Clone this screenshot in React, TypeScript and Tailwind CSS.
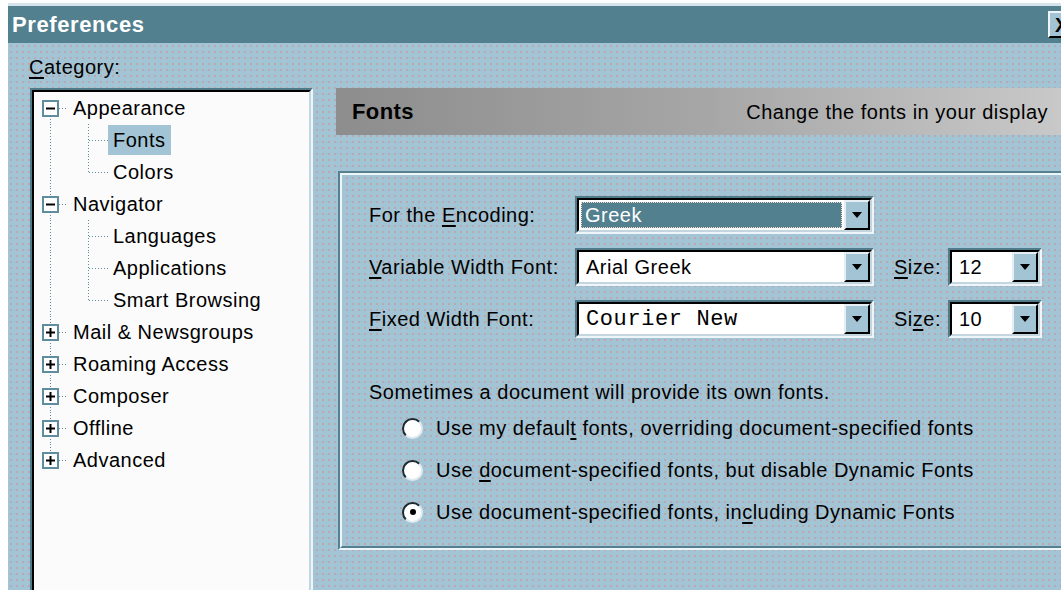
import React from 'react';

type TreeNode = { label: string; children?: string[] };

const tree: TreeNode[] = [
  { label: 'Appearance', children: ['Fonts', 'Colors'] },
  { label: 'Navigator', children: ['Languages', 'Applications', 'Smart Browsing'] },
  { label: 'Mail & Newsgroups' },
  { label: 'Roaming Access' },
  { label: 'Composer' },
  { label: 'Offline' },
  { label: 'Advanced' },
];

const SELECTED = 'Fonts';
const LINE = '#5f8d9d';

// dotted face of the dialog
const FACE =
  'bg-[#a3c4d4] bg-[radial-gradient(circle,#b7a9b1_0.9px,transparent_1.3px)] bg-[length:6px_6px]';

function TopGutter({ first, last, open }: { first: boolean; last: boolean; open: boolean }) {
  return (
    <svg width="34" height="32" className="shrink-0">
      {!first && <line x1="16.5" y1="0" x2="16.5" y2="8" stroke={LINE} strokeDasharray="1 2" />}
      {!last && <line x1="16.5" y1="24" x2="16.5" y2="32" stroke={LINE} strokeDasharray="1 2" />}
      <line x1="25" y1="16.5" x2="34" y2="16.5" stroke={LINE} strokeDasharray="1 2" />
      <rect x="9" y="9" width="15" height="15" fill="#fff" stroke={LINE} strokeWidth="2" />
      <line x1="12" y1="16.5" x2="21" y2="16.5" stroke="#000" strokeWidth="2" />
      {!open && <line x1="16.5" y1="12" x2="16.5" y2="21" stroke="#000" strokeWidth="2" />}
    </svg>
  );
}

function ChildGutter({ lastChild }: { lastChild: boolean }) {
  return (
    <svg width="74" height="32" className="shrink-0">
      <line x1="16.5" y1="0" x2="16.5" y2="32" stroke={LINE} strokeDasharray="1 2" />
      <line x1="54.5" y1="0" x2="54.5" y2={lastChild ? 16 : 32} stroke={LINE} strokeDasharray="1 2" />
      <line x1="55" y1="16.5" x2="74" y2="16.5" stroke={LINE} strokeDasharray="1 2" />
    </svg>
  );
}

function CategoryTree() {
  const rows: React.ReactNode[] = [];
  tree.forEach((node, i) => {
    const open = !!node.children;
    rows.push(
      <div key={node.label} className="flex h-[32px] items-center">
        <TopGutter first={i === 0} last={i === tree.length - 1} open={open} />
        <span className="px-[5px]">{node.label}</span>
      </div>
    );
    node.children?.forEach((child, j) => {
      rows.push(
        <div key={child} className="flex h-[32px] items-center">
          <ChildGutter lastChild={j === node.children!.length - 1} />
          <span className={`px-[5px] leading-[30px] ${child === SELECTED ? 'bg-[#a3c4d4]' : ''}`}>{child}</span>
        </div>
      );
    });
  });
  return <div className="flex flex-col">{rows}</div>;
}

function DropButton() {
  return (
    <div className="flex w-[26px] shrink-0 items-center justify-center border-2 border-t-[#e4eef3] border-l-[#e4eef3] border-r-black border-b-black bg-[#a3c4d4]">
      <svg width="10" height="6" viewBox="0 0 10 6">
        <path d="M0 0 H10 L5 6 Z" fill="#000" />
      </svg>
    </div>
  );
}

function Combo({
  value,
  width,
  mono,
  focused,
}: {
  value: string;
  width: string;
  mono?: boolean;
  focused?: boolean;
}) {
  return (
    <div
      className={`${width} h-[38px] shrink-0 border-2 border-t-[#4f7b8a] border-l-[#4f7b8a] border-r-[#eef5f8] border-b-[#eef5f8]`}
    >
      <div className="flex h-full border-2 border-t-black border-l-black border-r-[#c3d6df] border-b-[#c3d6df] bg-white">
        <div className="flex flex-1 items-center p-[2px]">
          {focused ? (
            <div className="flex h-full w-full items-center border border-dotted border-[#f3d9c6] bg-[#52808f] px-[3px] text-white">
              {value}
            </div>
          ) : (
            <span
              className={
                mono
                  ? "pl-[5px] font-['Liberation_Mono','Courier_New',monospace] text-[22px] tracking-[0.6px]"
                  : 'pl-[5px]'
              }
            >
              {value}
            </span>
          )}
        </div>
        <DropButton />
      </div>
    </div>
  );
}

function Radio({ checked, children }: { checked?: boolean; children: React.ReactNode }) {
  return (
    <div className="flex h-[42px] items-center">
      <div className="flex h-[21px] w-[21px] items-center justify-center rounded-full border-2 border-t-[#1d2a30] border-l-[#1d2a30] border-r-[#dfe9ee] border-b-[#dfe9ee] bg-white">
        {checked && <div className="h-[6px] w-[6px] rounded-full bg-black" />}
      </div>
      <span className="ml-[13px]">{children}</span>
    </div>
  );
}

export default function App() {
  return (
    <div className="h-[590px] w-[1061px] overflow-hidden bg-white pl-[8px] pt-[3px] font-['Liberation_Sans',Arial,sans-serif] text-[20px] tracking-[0.5px] text-black">
      <div className="flex h-[640px] w-[1080px] flex-col border-t-[3px] border-[#d6e3ea]">
        {/* title bar */}
        <div className="flex h-[37px] shrink-0 items-center justify-between bg-[#52808f] pl-[4px] pr-[12px]">
          <span className="text-[22px] font-bold tracking-[0.6px] text-white">Preferences</span>
          <div className="flex h-[27px] w-[28px] items-center justify-start border-2 border-t-[#eef5f8] border-l-[#eef5f8] border-r-black border-b-black bg-[#a3c4d4] pl-[5px] text-[20px] font-bold leading-none">
            X
          </div>
        </div>

        <div className={`flex flex-1 ${FACE}`}>
          {/* category column */}
          <div className="flex w-[305px] shrink-0 flex-col pl-[21px]">
            <div className="mt-[12px] h-[24px] leading-[24px]">
              <u className="underline-offset-[3px]">C</u>ategory:
            </div>
            <div className="ml-[1px] mt-[9px] flex-1 border-2 border-t-[#4f7b8a] border-l-[#4f7b8a] border-r-[#eef5f8] border-b-[#eef5f8]">
              <div className="h-full border-2 border-t-black border-l-black border-r-[#c3d6df] border-b-[#c3d6df] bg-[#fbfbfb]">
                <CategoryTree />
              </div>
            </div>
          </div>

          {/* settings page */}
          <div className="ml-[23px] flex w-[732px] flex-col">
            <div className="mt-[45px] flex h-[47px] items-center justify-between bg-gradient-to-r from-[#8d8d8d] via-[#a6a6a6] to-[#c9c9c9] pl-[16px] pr-[20px]">
              <span className="text-[22px] font-bold tracking-[0.4px]">Fonts</span>
              <span>Change the fonts in your display</span>
            </div>

            <div className="ml-[2px] mt-[36px] h-[379px] border-2 border-t-[#54808f] border-l-[#54808f] border-r-[#eef5f8] border-b-[#eef5f8]">
              <div className="h-full border-2 border-t-[#eef5f8] border-l-[#eef5f8] border-r-[#54808f] border-b-[#54808f] pl-[27px] pt-[21px]">
                <div className="flex flex-col gap-[14px]">
                  <div className="flex items-center">
                    <span className="w-[206px]">
                      For the <u className="underline-offset-[3px]">E</u>ncoding:
                    </span>
                    <Combo value="Greek" width="w-[299px]" focused />
                  </div>
                  <div className="flex items-center">
                    <span className="w-[206px]">
                      <u className="underline-offset-[3px]">V</u>ariable Width Font:
                    </span>
                    <Combo value="Arial Greek" width="w-[299px]" />
                    <span className="ml-[20px] w-[54px]">
                      <u className="underline-offset-[3px]">S</u>ize:
                    </span>
                    <Combo value="12" width="w-[94px]" />
                  </div>
                  <div className="flex items-center">
                    <span className="w-[206px]">
                      <u className="underline-offset-[3px]">F</u>ixed Width Font:
                    </span>
                    <Combo value="Courier New" width="w-[299px]" mono />
                    <span className="ml-[20px] w-[54px]">
                      Si<u className="underline-offset-[3px]">z</u>e:
                    </span>
                    <Combo value="10" width="w-[94px]" />
                  </div>
                </div>

                <div className="mt-[42px] h-[24px] leading-[24px]">
                  Sometimes a document will provide its own fonts.
                </div>
                <div className="ml-[33px] mt-[3px] flex flex-col">
                  <Radio>
                    Use my defaul<u className="underline-offset-[3px]">t</u> fonts, overriding document-specified fonts
                  </Radio>
                  <Radio>
                    Use <u className="underline-offset-[3px]">d</u>ocument-specified fonts, but disable Dynamic Fonts
                  </Radio>
                  <Radio checked>
                    Use document-specified fonts, in<u className="underline-offset-[3px]">c</u>luding Dynamic Fonts
                  </Radio>
                </div>
              </div>
            </div>
          </div>
        </div>
      </div>
    </div>
  );
}
